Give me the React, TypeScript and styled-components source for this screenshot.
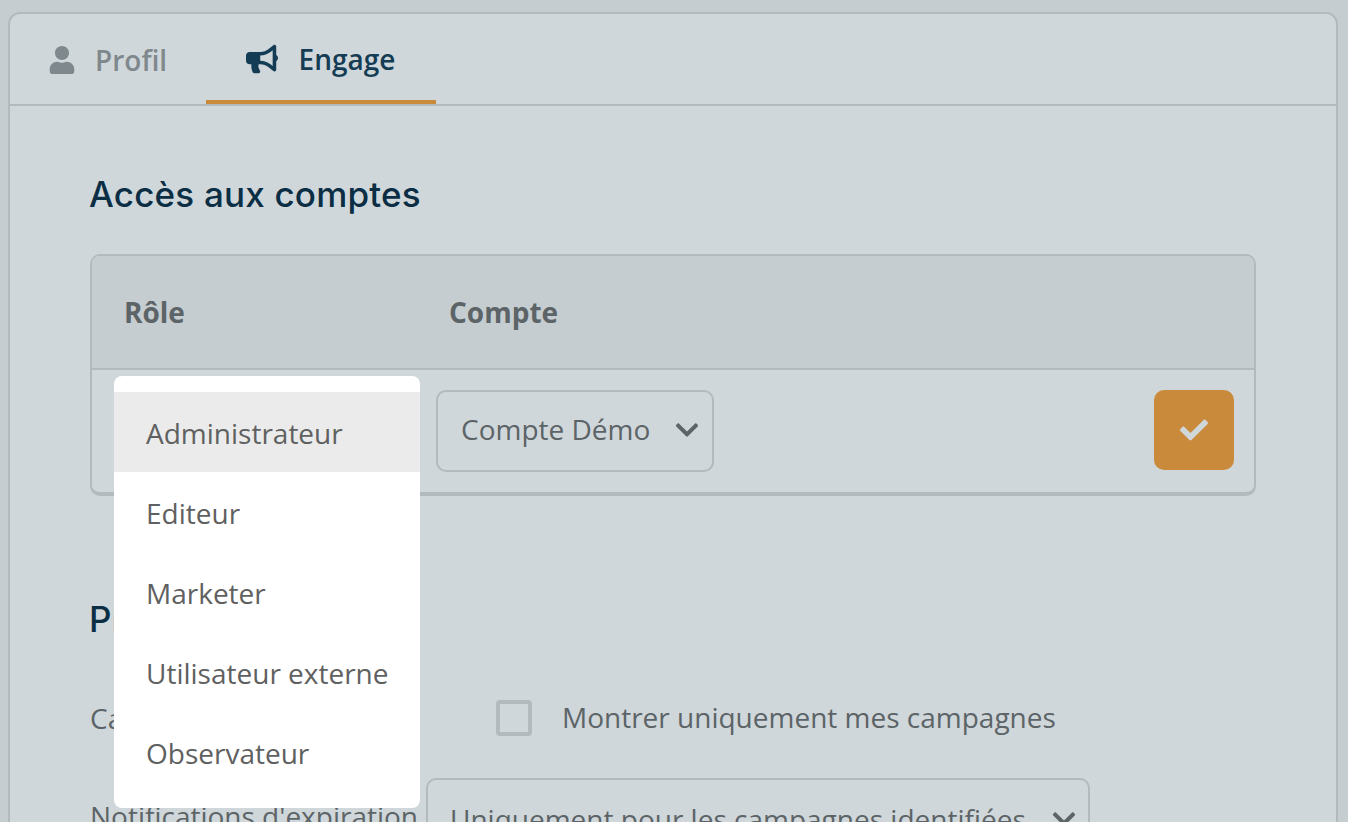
import { FC } from "react";
import styled, { createGlobalStyle } from "styled-components";
import { FaBullhorn, FaCheck, FaChevronDown, FaUser } from "react-icons/fa";

const GlobalStyle = createGlobalStyle`
  html, body {
    margin: 0;
    height: 822px;
    overflow: hidden;
    background: #c5cdd0;
    font-family: "Open Sans", "Liberation Sans", sans-serif;
  }
  * { box-sizing: border-box; }
`;

const ROLES = ["Administrateur", "Editeur", "Marketer", "Utilisateur externe", "Observateur"];

const App: FC = () => {
  return (
    <Page>
      <GlobalStyle />
      <Panel>
        <Tabs>
          <ProfileTab>
            <FaUser size={28} />
            <span>Profil</span>
          </ProfileTab>
          <EngageTab>
            <FaBullhorn size={32} />
            <span>Engage</span>
          </EngageTab>
        </Tabs>
        <Content>
          <SectionTitle>Accès aux comptes</SectionTitle>
          <Table>
            <TableHead>
              <RoleHead>Rôle</RoleHead>
              <span>Compte</span>
            </TableHead>
            <TableRow>
              <RoleCell>
                <RoleMenu>
                  {ROLES.map((role, i) => (
                    <RoleItem key={role} $selected={i === 0}>
                      {role}
                    </RoleItem>
                  ))}
                </RoleMenu>
              </RoleCell>
              <AccountSelect>
                <span>Compte Démo</span>
                <FaChevronDown size={26} />
              </AccountSelect>
              <ConfirmButton>
                <FaCheck size={28} />
              </ConfirmButton>
            </TableRow>
          </Table>
          <PreferencesTitle>Préférences</PreferencesTitle>
          <CheckRow>
            <span>Campagnes</span>
            <Checkbox />
            <CheckText>Montrer uniquement mes campagnes</CheckText>
          </CheckRow>
          <SelectRow>
            <SelectLabel>Notifications d'expiration</SelectLabel>
            <ExpirySelect>
              <span>Uniquement pour les campagnes identifiées</span>
              <FaChevronDown size={26} />
            </ExpirySelect>
          </SelectRow>
        </Content>
      </Panel>
    </Page>
  );
};

const Page = styled.div`
  padding: 12px 10px 0 8px;
  height: 822px;
  overflow: hidden;
`;

const Panel = styled.div`
  height: 900px;
  background: #d0d7da;
  border: 2px solid #b2babd;
  border-radius: 12px 12px 0 0;
`;

const Tabs = styled.div`
  display: flex;
  height: 92px;
  padding-left: 19px;
  border-bottom: 2px solid #b2babd;
`;

const ProfileTab = styled.div`
  display: flex;
  align-items: center;
  gap: 19px;
  width: 177px;
  height: 90px;
  padding: 1px 0 0 19px;
  font-size: 28px;
  font-weight: 600;
  color: #7f888c;
`;

const EngageTab = styled.div`
  display: flex;
  align-items: center;
  justify-content: center;
  gap: 21px;
  width: 230px;
  height: 90px;
  padding: 4px 1px 0 0;
  font-size: 28px;
  font-weight: 600;
  color: #143c54;
  border-bottom: 4px solid #c98a3c;
`;

const Content = styled.div`
  padding: 0 80px;
`;

const SectionTitle = styled.h2`
  margin: 64px 0 36px -1px;
  height: 48px;
  line-height: 48px;
  font-family: "Inter", "Open Sans", sans-serif;
  font-size: 35px;
  font-weight: 500;
  letter-spacing: 0.2px;
  color: #0b2e45;
`;

const Table = styled.div`
  height: 242px;
  border: 2px solid #b2babd;
  border-bottom-width: 4px;
  border-radius: 10px;
`;

const TableHead = styled.div`
  display: flex;
  align-items: center;
  height: 114px;
  padding-left: 32px;
  background: #c5cdd0;
  border-bottom: 2px solid #b2babd;
  border-radius: 8px 8px 0 0;
  font-size: 28px;
  font-weight: 700;
  color: #5c6467;
`;

const RoleHead = styled.span`
  width: 325px;
`;

const TableRow = styled.div`
  display: flex;
  align-items: center;
  height: 122px;
  padding: 0 20px 0 22px;
`;

const RoleCell = styled.div`
  position: relative;
  align-self: stretch;
  width: 322px;
`;

const RoleMenu = styled.div`
  position: absolute;
  top: 6px;
  left: 0;
  z-index: 2;
  width: 306px;
  padding: 16px 0;
  background: #fff;
  border-radius: 8px;
`;

const RoleItem = styled.div<{ $selected?: boolean }>`
  display: flex;
  align-items: center;
  height: 80px;
  padding: 2px 0 0 32px;
  font-size: 28px;
  color: #5f6161;
  background: ${(p) => (p.$selected ? "#ebebeb" : "#fff")};
`;

const AccountSelect = styled.div`
  display: flex;
  align-items: center;
  justify-content: space-between;
  width: 278px;
  height: 82px;
  padding: 0 12px 2px 23px;
  border: 2px solid #b2babd;
  border-radius: 10px;
  font-size: 28px;
  color: #5c6467;

  & > span {
    margin-top: -2px;
  }
`;

const ConfirmButton = styled.div`
  display: flex;
  align-items: center;
  justify-content: center;
  width: 80px;
  height: 80px;
  margin: 0 0 2px auto;
  background: #c98a3c;
  border-radius: 10px;
  color: #d0d7da;
`;

const PreferencesTitle = styled(SectionTitle)`
  margin: 99px 0 0 -1px;
`;

const CheckRow = styled.div`
  display: grid;
  grid-template-columns: 406px 36px auto;
  align-items: center;
  justify-content: start;
  height: 36px;
  margin-top: 56px;
  font-size: 28px;
  color: #5c6467;
`;

const CheckText = styled.span`
  margin: -2px 0 0 30px;
`;

const Checkbox = styled.div`
  width: 36px;
  height: 36px;
  border: 4px solid #b2babd;
  border-radius: 4px;
`;

const SelectRow = styled.div`
  display: flex;
  align-items: flex-start;
  margin-top: 43px;
  font-size: 28px;
  color: #5c6467;
`;

const SelectLabel = styled.span`
  width: 336px;
  padding-top: 19px;
  white-space: nowrap;
`;

const ExpirySelect = styled.div`
  display: flex;
  align-items: center;
  justify-content: space-between;
  width: 664px;
  height: 82px;
  padding: 0 11px 0 22px;
  border: 2px solid #b2babd;
  border-radius: 10px;
  white-space: nowrap;
`;

export default App;
